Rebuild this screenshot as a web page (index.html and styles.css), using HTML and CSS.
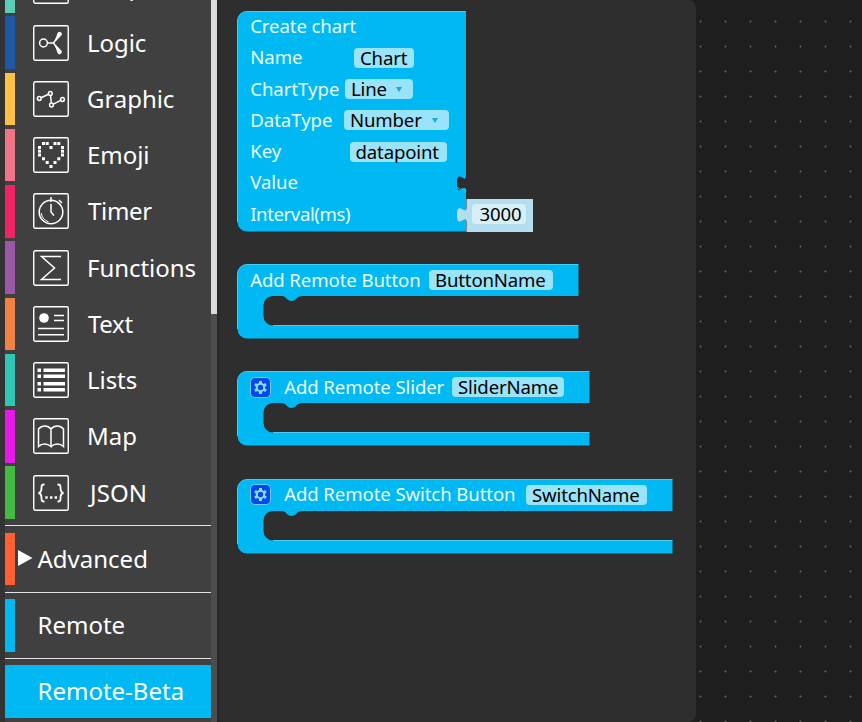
FILE: index.html
```
<!DOCTYPE html>
<html lang="en">
<head>
<meta charset="utf-8">
<title>Block editor</title>
<link rel="stylesheet" href="styles.css">
</head>
<body>
<div class="editor">
  <nav class="toolbox">
    <ul class="categories">
      <li class="cat c-graph"><svg class="icon" viewBox="0 0 36 36"><rect class="frame" x=".75" y=".75" width="34.5" height="34.5" rx="1.5"/></svg><span class="cat-name">Loops</span></li>
      <li class="cat c-logic"><svg class="icon" viewBox="0 0 36 36"><rect class="frame" x=".75" y=".75" width="34.5" height="34.5" rx="1.5"/><circle cx="10.5" cy="18" r="3.9"/><path d="M14.5 18H20M26.5 9.5L20.5 18L26.5 26.5"/><path class="solid" d="M24.500 8.300a2.200 2.200 0 1 1 3.600 2.400L23 16l-1-1zM24.500 27.700a2.200 2.200 0 1 0 3.600-2.400L23 20l-1 1z"/></svg><span class="cat-name">Logic</span></li>
      <li class="cat c-graphic"><svg class="icon" viewBox="0 0 36 36"><rect class="frame" x=".75" y=".75" width="34.5" height="34.5" rx="1.5"/><circle cx="6.300" cy="17.500" r="1.900"/><circle cx="17.300" cy="12.500" r="1.900"/><circle cx="18.500" cy="24" r="1.900"/><circle cx="29.500" cy="18.500" r="1.900"/><path d="M8.100 16.700L15.500 13.300M17.500 14.500L18.400 22M20.300 23.100L27.700 19.400"/></svg><span class="cat-name">Graphic</span></li>
      <li class="cat c-emoji"><svg class="icon" viewBox="0 0 36 36"><rect class="frame" x=".75" y=".75" width="34.5" height="34.5" rx="1.5"/><path class="solid" d="M9 5h3v3H9zM12.700 5h3v3h-3zM20.500 5h3v3h-3zM24.300 5h3v3h-3zM5 9h3v3H5zM16.500 9h3v3h-3zM28 9h3v3h-3zM5 12.800h3v3H5zM28 12.800h3v3h-3zM5 16.500h3v3H5zM28 16.500h3v3h-3zM9 20.300h3v3H9zM24.300 20.300h3v3h-3zM12.700 24h3v3h-3zM20.500 24h3v3h-3zM16.500 28h3v3h-3z"/></svg><span class="cat-name">Emoji</span></li>
      <li class="cat c-timer"><svg class="icon" viewBox="0 0 36 36"><rect class="frame" x=".75" y=".75" width="34.5" height="34.5" rx="1.5"/><circle cx="18" cy="19" r="11.800"/><path d="M18 4v5M18 11v8l3 3.500M26 7l3 3M24.800 9.500L27.500 12"/><path class="thin" d="M8.300 20c.5 4.500 3 7.500 7.200 8.800"/></svg><span class="cat-name indent">Timer</span></li>
      <li class="cat c-functions"><svg class="icon" viewBox="0 0 36 36"><rect class="frame" x=".75" y=".75" width="34.5" height="34.5" rx="1.5"/><path d="M28 6.500H8.500L21.500 18L8.500 29.500H28"/></svg><span class="cat-name">Functions</span></li>
      <li class="cat c-text"><svg class="icon" viewBox="0 0 36 36"><rect class="frame" x=".75" y=".75" width="34.5" height="34.5" rx="1.5"/><circle class="solid" cx="11" cy="12" r="4.800"/><path d="M21 9.500H31M21 14.500H31M5 22.500H31M5 28.700H31"/></svg><span class="cat-name indent">Text</span></li>
      <li class="cat c-lists"><svg class="icon" viewBox="0 0 36 36"><rect class="frame" x=".75" y=".75" width="34.5" height="34.5" rx="1.5"/><path class="solid" d="M4.500 6.500h3.500v3.500H4.500zM10.500 6.500h21.500v3.500H10.500zM4.500 12.500h3.500v3.500H4.500zM10.500 12.500h21.500v3.500H10.500zM4.500 20h3.500v3.500H4.500zM10.500 20h21.500v3.500H10.500zM4.500 26h3.500v3.500H4.500zM10.500 26h21.500v3.500H10.500z"/></svg><span class="cat-name">Lists</span></li>
      <li class="cat c-map"><svg class="icon" viewBox="0 0 36 36"><rect class="frame" x=".75" y=".75" width="34.5" height="34.5" rx="1.5"/><path d="M18 11V28.500C14 25 9 25 5.500 28.500V11C9 7 14.500 7 18 11C21.500 7 27 7 30.500 11V28.500C27 25 22 25 18 28.500"/></svg><span class="cat-name">Map</span></li>
      <li class="cat c-json"><svg class="icon" viewBox="0 0 36 36"><rect class="frame" x=".75" y=".75" width="34.5" height="34.5" rx="1.5"/><path class="brace" d="M11.500 9.500C8.500 9.500 8.500 10.500 8.500 13C8.500 16 8 17.500 5.500 18C8 18.500 8.500 20 8.500 23C8.500 25.500 8.500 26.500 11.500 26.500M24.500 9.500C27.500 9.500 27.500 10.500 27.500 13C27.500 16 28 17.500 30.500 18C28 18.500 27.500 20 27.500 23C27.500 25.500 27.500 26.500 24.500 26.500"/><path class="solid" d="M12.300 21.300h2.400v2.400h-2.400zM17 21.300h2.400v2.400H17zM21.600 21.300h2.400v2.400h-2.400z"/></svg><span class="cat-name json-name">JSON</span></li>
    </ul>
    <ul class="groups">
      <li class="group"><div class="cat c-advanced"><svg class="arrow" viewBox="0 0 15 16"><path d="M0 0L14.500 8L0 16z"/></svg><span class="group-name">Advanced</span></div></li>
      <li class="group"><div class="cat c-remote"><span class="group-name">Remote</span></div></li>
      <li class="group"><div class="cat c-beta"><span class="group-name">Remote-Beta</span></div></li>
    </ul>
  </nav>
  <div class="scrollbar"><div class="thumb"></div></div>
  <section class="flyout">
    <div class="block create-chart">
      <svg class="shape" width="298" height="222"><path class="body" d="M10 .5H229V164.500c0 10-9-8-9 8s9-2.500 9 8V220.500H10A9.500 9.500 0 0 1 .5 211V10A9.500 9.500 0 0 1 10 .5z"/><path class="edge" d="M.5 211V10A9.500 9.500 0 0 1 10 .5H229M220.500 176c1 5 8.500-1 8.500 4.500"/><path class="number" d="M229.500 188H296V221H229.500V211.500c0-10-9.500 8-9.500-7.500s9.500 2.500 9.500-8z"/></svg>
      <div class="line"><span class="label">Create chart</span></div>
      <div class="line"><span class="label w-name">Name</span><span class="field f-chart">Chart</span></div>
      <div class="line"><span class="label w-ctype">ChartType</span><span class="field f-line">Line<i class="caret"></i></span></div>
      <div class="line"><span class="label w-dtype">DataType</span><span class="field f-number">Number<i class="caret"></i></span></div>
      <div class="line"><span class="label w-key">Key</span><span class="field f-key">datapoint</span></div>
      <div class="line"><span class="label">Value</span></div>
      <div class="line"><span class="label w-interval">Interval(ms)</span><span class="field f-3000">3000</span></div>
    </div>
    <div class="block statement b-button">
      <svg class="shape" width="343" height="76"><path class="body" d="M10 .5H341.500V32H65C60 32 59 37 54.500 37S49 32 45 32H36A9.500 9.500 0 0 0 26.500 41V52A9.500 9.500 0 0 0 36 61.500H341.500V74.500H10A9.500 9.500 0 0 1 .5 65V10A9.500 9.500 0 0 1 10 .5z"/><path class="edge" d="M.5 65V10A9.500 9.500 0 0 1 10 .5H341.500M36 61.500H341.500"/></svg>
      <div class="line"><span class="label w-rbutton">Add Remote Button</span><span class="field f-button">ButtonName</span></div>
    </div>
    <div class="block statement b-slider">
      <svg class="shape" width="354" height="76"><path class="body" d="M10 .5H352.500V32H65C60 32 59 37 54.500 37S49 32 45 32H36A9.500 9.500 0 0 0 26.500 41V52A9.500 9.500 0 0 0 36 61.500H352.500V74.500H10A9.500 9.500 0 0 1 .5 65V10A9.500 9.500 0 0 1 10 .5z"/><path class="edge" d="M.5 65V10A9.500 9.500 0 0 1 10 .5H352.500M36 61.500H352.500"/></svg>
      <div class="line"><svg class="gear" viewBox="0 0 21 21"><rect x=".5" y=".5" width="20" height="20" rx="4"/><path class="teeth" d="M10.500 4V17M4.900 7.200L16.100 13.800M16.100 7.200L4.900 13.800"/><circle cx="10.500" cy="10.500" r="3.700"/></svg><span class="label w-rslider">Add Remote Slider</span><span class="field f-slider">SliderName</span></div>
    </div>
    <div class="block statement b-switch">
      <svg class="shape" width="437" height="76"><path class="body" d="M10 .5H435.500V32H65C60 32 59 37 54.500 37S49 32 45 32H36A9.500 9.500 0 0 0 26.500 41V52A9.500 9.500 0 0 0 36 61.500H435.500V74.500H10A9.500 9.500 0 0 1 .5 65V10A9.500 9.500 0 0 1 10 .5z"/><path class="edge" d="M.5 65V10A9.500 9.500 0 0 1 10 .5H435.500M36 61.500H435.500"/></svg>
      <div class="line"><svg class="gear" viewBox="0 0 21 21"><rect x=".5" y=".5" width="20" height="20" rx="4"/><path class="teeth" d="M10.500 4V17M4.900 7.200L16.100 13.800M16.100 7.200L4.900 13.800"/><circle cx="10.500" cy="10.500" r="3.700"/></svg><span class="label w-rswitch">Add Remote Switch Button</span><span class="field f-switch">SwitchName</span></div>
    </div>
  </section>
  <main class="workspace"></main>
</div>
</body>
</html>
```
FILE: styles.css
```
* { box-sizing: border-box; }
body { margin: 0; background: #1e1e1e; font-family: "Noto Sans", sans-serif; color: #fff; overflow: hidden; }
ul { list-style: none; margin: 0; padding: 0; }

.editor { display: flex; height: 722px; overflow: hidden; background: #1e1e1e; }

/* Toolbox */
.toolbox { flex: none; width: 211px; border-left: 5px solid #333; background: #404040; height: 722px; overflow: hidden; }
.categories { margin-top: -40px; height: 565px; }
.cat { display: flex; align-items: center; height: 52.5px; margin-bottom: 3.75px; border-left: 10px solid; }
.icon { width: 36px; height: 36px; margin-left: 18px; flex: none; fill: none; stroke: #fff; stroke-width: 1.5; }
.frame { stroke-width: 1.4; }
.icon .solid { fill: #fff; stroke: none; }
.icon .thin { stroke-width: 1; }
.icon .brace { stroke-width: 1.8; }
.cat-name { font-size: 24px; line-height: 32px; margin-left: 18px; letter-spacing: -0.05px; }
.indent { margin-left: 19px; letter-spacing: -0.3px; }
.json-name { margin-left: 21px; letter-spacing: 0.1px; }
.c-graph { border-color: #5bcdb4; }
.c-logic { border-color: #1f58a4; }
.c-graphic { border-color: #ffc045; }
.c-emoji { border-color: #ef7485; }
.c-timer { border-color: #f02464; }
.c-functions { border-color: #9a58a6; }
.c-text { border-color: #f18142; }
.c-lists { border-color: #30c5b5; }
.c-map { border-color: #e619e6; }
.c-json { border-color: #43bb43; }
.c-advanced { border-color: #ff5f33; }
.c-remote { border-color: #00b9f2; }
.c-beta { border-color: #00b9f2; background: #00b9f2; }
.group { border-top: 1px solid #e4e4e4; padding-top: 6.500px; height: 66.500px; }
.group .cat { margin: 0; position: relative; }
.group:last-child { padding-top: 6px; }
.group-name { font-size: 24px; line-height: 32px; margin-left: 22.500px; }
.arrow { position: absolute; left: 3px; top: 17px; width: 15px; height: 16px; fill: #fff; }

.scrollbar { flex: none; width: 6px; background: #4d4d4d; }
.thumb { height: 314px; background: #dcdada; }

/* Flyout */
.flyout { flex: none; width: 479px; padding: 11px 0 0 20px; background: #2e2e2e; border-radius: 0 8px 8px 0; box-shadow: inset 3px 0 2px -1px #262626; }
.block { position: relative; font-size: 18.600px; }
.shape { position: absolute; left: 0; top: 0; }
.body { fill: #00b9f2; }
.edge { fill: none; stroke: #42cdf7; stroke-width: 1; }
.number { fill: #b3def0; }
.create-chart { height: 253px; }
.statement { height: 107.300px; }
.line { position: relative; display: flex; align-items: center; height: 31.250px; padding-left: 12.500px; }
.statement .line { height: 32px; }
.label { flex: none; letter-spacing: -0.03px; white-space: nowrap; color: #e8fbff; line-height: 26px; padding-left: .7px; margin-top: -1px; }
.line:first-of-type .label { letter-spacing: -0.1px; }
.field { position: relative; display: block; flex: none; height: 20px; line-height: 19px; padding-left: 6px; border-radius: 4px; background: #99e3fb; color: #000; white-space: nowrap; letter-spacing: -0.15px; }
.caret { position: absolute; right: 11px; top: 8px; border: 3px solid transparent; border-top: 5px solid #1ba6d4; border-bottom: 0; }

.w-name { width: 104.500px; }
.w-ctype { width: 95.500px; }
.w-dtype { width: 94.500px; }
.w-key { width: 100px; }
.w-interval { width: 222.500px; letter-spacing: -0.4px; }
.w-rbutton { width: 179.500px; }
.f-chart { width: 60px; }
.f-line { width: 68px; }
.f-number { width: 105px; }
.f-key { width: 97px; }
.f-3000 { width: 54px; padding-left: 7.500px; background: #d9eff8; }
.f-button { width: 124px; }
.gear { flex: none; width: 21px; height: 21px; margin-right: 13px; fill: none; stroke: #8adcff; stroke-width: 2; }
.gear rect { fill: #0449ee; stroke: #6fcdfb; stroke-width: 1; }
.gear .teeth { stroke-width: 3; }
.gear circle { fill: #0449ee; }
.line .w-rbutton, .line .w-rslider, .line .w-rswitch { letter-spacing: 0; }
.w-rslider { width: 168.500px; }
.w-rswitch { width: 242.500px; }
.f-slider { width: 112px; }
.f-switch { width: 121px; }

/* Workspace grid: one dot every 25px */
.workspace { flex: 1; background: radial-gradient(circle at 4.500px 21.500px, #5c5c5c 0, #444 1px, transparent 1.400px) 0 0 / 25px 25px; }
```
